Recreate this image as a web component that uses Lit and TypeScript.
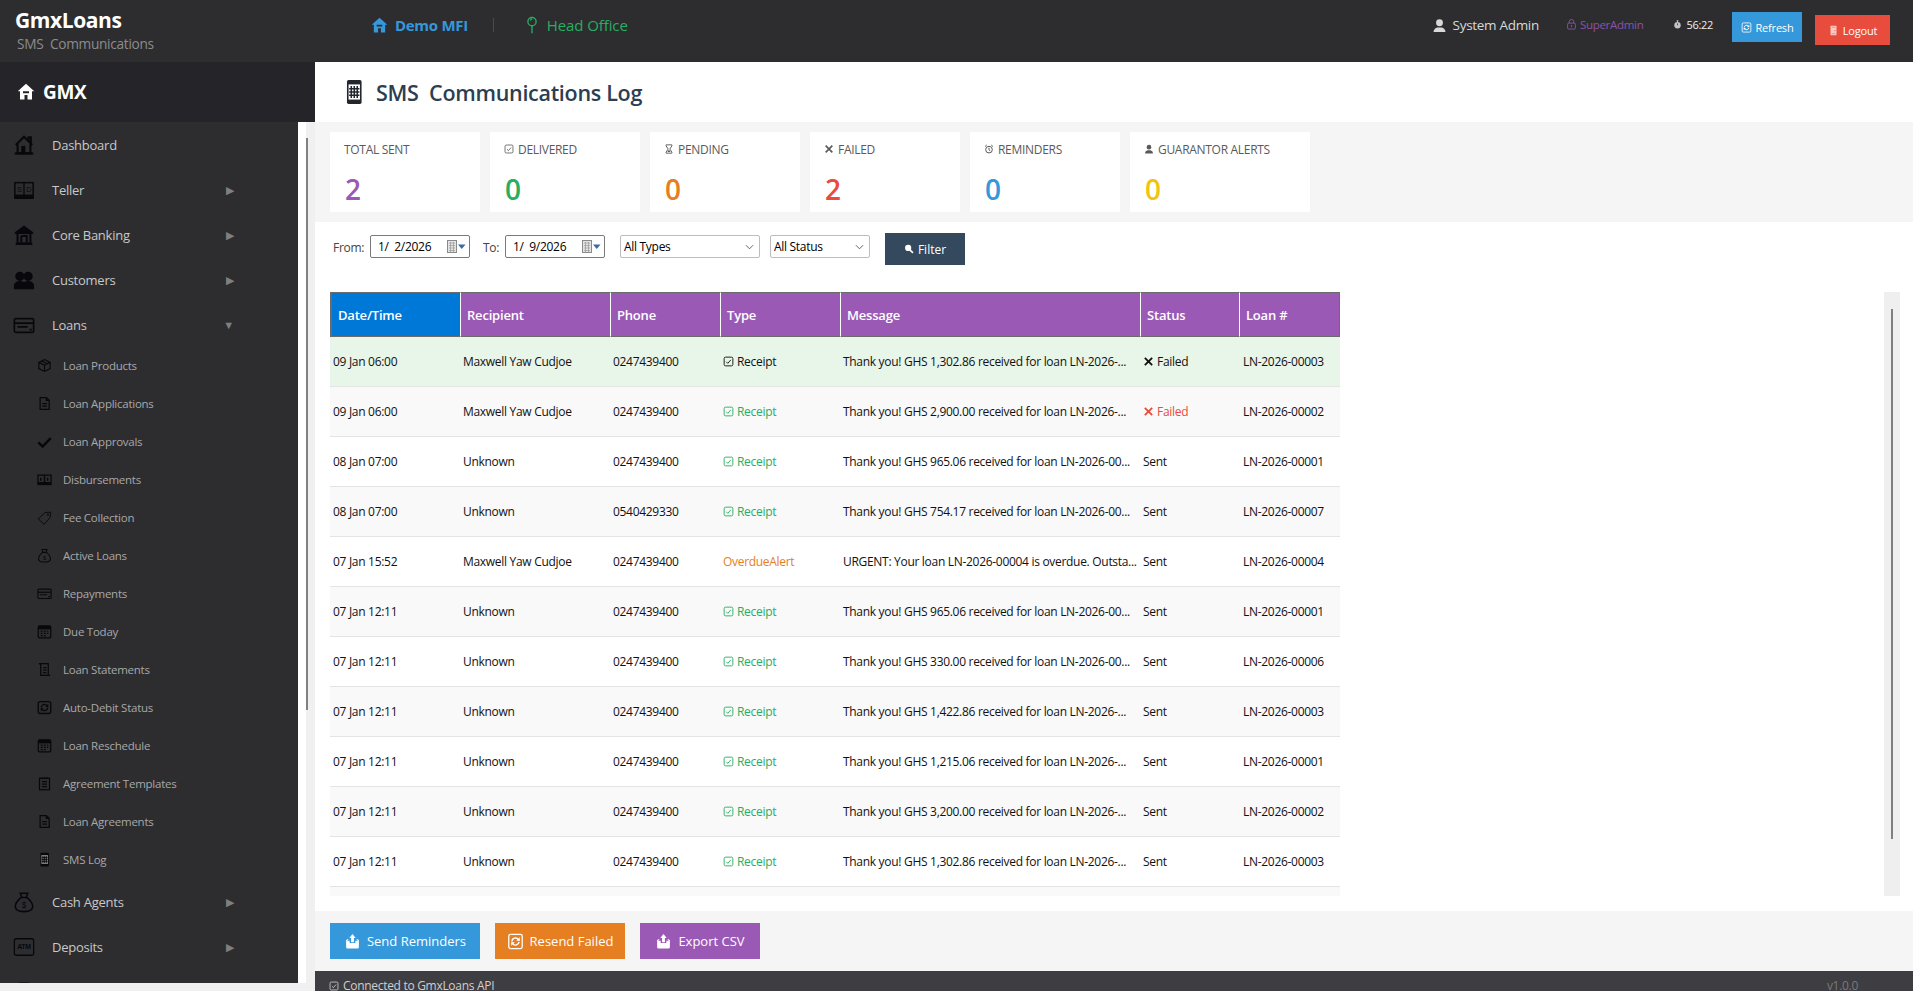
import { LitElement, html, css, svg } from 'lit'
import { customElement } from 'lit/decorators.js'

const icons: Record<string, unknown> = {
  home: svg`<path d="M3 12 12 3l9 9M17 7V3.500h2.500V9.500M5 10.500V21h14V10.500" fill="none" stroke="currentColor" stroke-width="2.200"/><rect x="9" y="13" width="4.500" height="8" fill="currentColor"/><rect x="2" y="20" width="20" height="2.500" fill="currentColor"/>`,
  teller: svg`<rect x="2" y="4" width="20" height="17" fill="none" stroke="currentColor" stroke-width="1.600"/><rect x="2" y="17" width="20" height="4" fill="currentColor"/><path d="M12 4v17" stroke="currentColor" stroke-width="1.500"/><text x="6.800" y="14.500" font-size="8" text-anchor="middle" font-family="Liberation Sans" fill="currentColor">S</text><text x="17.200" y="14.500" font-size="8" text-anchor="middle" font-family="Liberation Sans" fill="currentColor">D</text>`,
  bank: svg`<path d="M12 1.500 2 9v2h20V9zM3 20h18v3H3z" fill="currentColor"/><path d="M5 11v9M19 11v9M9 13h6v7M9 13v7" fill="none" stroke="currentColor" stroke-width="2.200"/>`,
  people: svg`<circle cx="7.500" cy="8" r="5" fill="currentColor"/><circle cx="16.500" cy="8" r="5" fill="currentColor"/><path d="M1 22v-4c0-3 3-5 6.500-5s4.500 1.500 4.500 1.500S13 13 16.500 13 23 15 23 18v4z" fill="currentColor"/>`,
  card: svg`<rect x="1.500" y="5" width="21" height="15" rx="1.500" fill="none" stroke="currentColor" stroke-width="1.800"/><path d="M2 9h20v2H2z" fill="currentColor"/><path d="M5 14h11M18 17h2.500" stroke="currentColor" stroke-width="1.800"/>`,
  box: svg`<path d="M12 2.500 21 7v10l-9 4.500L3 17V7zM3 7l9 4.500L21 7M12 11.500v10M7.500 4.800l9 4.500" fill="none" stroke="currentColor" stroke-width="1.800"/>`,
  doc: svg`<path d="M5 2.500h10l4.500 4.500v14.500H5zM15 2.500V7h4.500M8.500 12h7.500M8.500 16h7.500" fill="none" stroke="currentColor" stroke-width="2"/>`,
  check: svg`<path d="M2 13.500 9 20 22 6.500" fill="none" stroke="currentColor" stroke-width="4"/>`,
  disburse: svg`<rect x="1.500" y="5" width="21" height="15" fill="none" stroke="currentColor" stroke-width="2"/><rect x="1.500" y="16" width="21" height="4" fill="currentColor"/><path d="M12 5v15M6 9v5M17 9v5" stroke="currentColor" stroke-width="2.400"/>`,
  tag: svg`<path d="M2 14 13 4l9-.5-1 8.500-10 11z" fill="none" stroke="currentColor" stroke-width="1.500"/><circle cx="17.500" cy="7.500" r="1.500" fill="currentColor"/>`,
  bag: svg`<path d="M9 7c-3 2.500-6.500 6-6.500 10 0 4 4 5.500 9.500 5.500s9.500-1.500 9.500-5.500c0-4-3.500-7.500-6.500-10zM9 7h6M9.500 6.500 8 2.500h8l-1.500 4" fill="none" stroke="currentColor" stroke-width="1.700"/><text x="12" y="19" font-size="9" text-anchor="middle" font-family="Liberation Sans" fill="currentColor">$</text>`,
  calendar: svg`<rect x="2" y="3" width="20" height="19" rx="2" fill="none" stroke="currentColor" stroke-width="2"/><rect x="2" y="3" width="20" height="5.500" fill="currentColor"/><path d="M6 11.500h3M11 11.500h3M16 11.500h2M6 15h3M11 15h3M16 15h2M6 18.500h3M11 18.500h3" stroke="currentColor" stroke-width="2"/>`,
  scroll: svg`<path d="M3 2.500h15v19M3 2.500c2 0 3 1 3 3v16h15M10 9h5M10 13h5M10 17h5" fill="none" stroke="currentColor" stroke-width="2"/>`,
  sync: svg`<rect x="2" y="2.500" width="20" height="19" rx="3" fill="none" stroke="currentColor" stroke-width="2.200"/><path d="M7 12a5 5 0 0 1 9-3l1.500 1.500M17 12a5 5 0 0 1-9 3l-1.500-1.500" fill="none" stroke="currentColor" stroke-width="2.200"/><path d="M18 6v5h-5zM6 18v-5h5z" fill="currentColor"/>`,
  clipboard: svg`<rect x="4" y="3.500" width="16" height="18.500" fill="none" stroke="currentColor" stroke-width="2"/><path d="M8 2v3M12 2v3M16 2v3M8 9h8M8 13h8M8 17h8" stroke="currentColor" stroke-width="1.800"/>`,
  mobile: svg`<rect x="5.500" y="1" width="13.500" height="22" rx="1.500" fill="currentColor"/><rect x="7" y="5" width="10.500" height="14" fill="#8a8a8d"/><path d="M9.500 6.500v11M12.250 6.500v11M15 6.500v11M7.500 9h9.500M7.500 12h9.500M7.500 15h9.500" stroke="currentColor" stroke-width="1.400"/>`,
  atm: svg`<rect x="1.500" y="3" width="21" height="18" rx="2" fill="none" stroke="currentColor" stroke-width="1.400"/><text x="12" y="14.500" font-size="7.500" font-weight="700" text-anchor="middle" font-family="Liberation Sans" fill="currentColor">ATM</text>`,
  house: svg`<path fill-rule="evenodd" d="M12 1 1 11h3v11h16V11h3zM8 11h8v2.500H8zM10 16h4v6h-4z" fill="currentColor"/>`,
  pin: svg`<circle cx="12" cy="7.500" r="5.500" fill="none" stroke="currentColor" stroke-width="1.800"/><path d="M12 13v10M10 6c.3-1.300 1-2 2-2" fill="none" stroke="currentColor" stroke-width="1.800"/>`,
  user: svg`<circle cx="12" cy="7.500" r="5.500" fill="currentColor"/><path d="M2.500 22.500c0-4.500 3-6.500 6-7.500h7c3 1 6 3 6 7.500z" fill="currentColor"/>`,
  lock: svg`<path d="M7 9V6a5 5 0 0 1 10 0v3" fill="none" stroke="currentColor" stroke-width="2"/><rect x="3.500" y="9" width="17" height="13" rx="2.500" fill="none" stroke="currentColor" stroke-width="2"/><path d="M12 13v5" stroke="currentColor" stroke-width="2"/>`,
  timer: svg`<circle cx="12" cy="14" r="8.500" fill="currentColor"/><path d="M9.500 2h5M12 2v4" stroke="currentColor" stroke-width="2.400"/><path d="M12 14V9" stroke="#2d2d30" stroke-width="2"/>`,
  refresh: svg`<rect x="2.500" y="2" width="19" height="20" rx="2.500" fill="none" stroke="currentColor" stroke-width="1.800"/><path d="M7 12a5 5 0 0 1 9-3l1.500 1.500M17 12.500a5 5 0 0 1-9 2.500l-1.500-1.500" fill="none" stroke="currentColor" stroke-width="2"/><path d="M18 6v5h-5zM6 18v-5h5z" fill="currentColor"/>`,
  door: svg`<rect x="5.500" y="1.500" width="13" height="21" rx="1" fill="#ffc9c2"/><circle cx="15" cy="12" r="1.300" fill="#e74c3c"/><path d="M8 5h8M8 19h8" stroke="#e74c3c" stroke-width="1"/>`,
  outbox: svg`<path d="M3 11h5v3h8v-3h5v9a2 2 0 0 1-2 2H5a2 2 0 0 1-2-2z" fill="currentColor"/><path d="M12 1.500 7.500 7H10v6h4V7h2.500z" fill="currentColor"/><path d="M6 9 3 11M18 9l3 2" stroke="currentColor" stroke-width="1.500"/>`,
  tick: svg`<rect x="2.500" y="2.500" width="19" height="19" rx="3" fill="none" stroke="currentColor" stroke-width="2"/><path d="M7 12.500l3.500 3.500L17 8.500" fill="none" stroke="currentColor" stroke-width="2"/>`,
  cross: svg`<path d="M4 4l16 16M20 4 4 20" fill="none" stroke="currentColor" stroke-width="4"/>`,
  hourglass: svg`<path d="M5 2h14v2.500L14 12l5 7.500V22H5v-2.500L10 12 5 4.500z" fill="none" stroke="currentColor" stroke-width="2.200"/><path d="M8 19h8l-4-5z" fill="currentColor"/>`,
  alarm: svg`<circle cx="12" cy="13.500" r="8" fill="none" stroke="currentColor" stroke-width="2.400"/><path d="M12 9v5l3 2M2.500 6 6.500 2.500M21.500 6l-4-3.500" fill="none" stroke="currentColor" stroke-width="2.400"/>`,
  search: svg`<circle cx="10" cy="9.500" r="7.500" fill="currentColor"/><path d="M14 14l7.500 7.500" stroke="currentColor" stroke-width="4"/>`,
}

const icon = (name: string) => html`<svg class="ico" viewBox="0 0 24 24" aria-hidden="true">${icons[name]}</svg>`

const calendarPicker = html`<svg class="cal" viewBox="0 0 19 14" aria-hidden="true">
  <rect x="0.500" y="0.500" width="9" height="12" fill="#e4e4e4" stroke="#8a8a8a"/>
  <path d="M2 3h6M2 5.500h6M2 8h6M2 10.500h6M3.500 2v10M6.500 2v10" stroke="#9a9a9a" stroke-width=".7"/>
  <path d="M11 4.500h7.500L14.750 9z" fill="#3a6ba5"/>
</svg>`

const chevron = html`<svg class="chev" viewBox="0 0 10 6" aria-hidden="true"><path d="M1 1l4 4 4-4" fill="none" stroke="#555" stroke-width="1"/></svg>`

const topNav = [
  { label: 'Dashboard', icon: 'home' },
  { label: 'Teller', icon: 'teller', arrow: '▶' },
  { label: 'Core Banking', icon: 'bank', arrow: '▶' },
  { label: 'Customers', icon: 'people', arrow: '▶' },
  { label: 'Loans', icon: 'card', arrow: '▼' },
]
const loanNav = [
  ['Loan Products', 'box'],
  ['Loan Applications', 'doc'],
  ['Loan Approvals', 'check'],
  ['Disbursements', 'disburse'],
  ['Fee Collection', 'tag'],
  ['Active Loans', 'bag'],
  ['Repayments', 'card'],
  ['Due Today', 'calendar'],
  ['Loan Statements', 'scroll'],
  ['Auto-Debit Status', 'sync'],
  ['Loan Reschedule', 'calendar'],
  ['Agreement Templates', 'clipboard'],
  ['Loan Agreements', 'doc'],
  ['SMS Log', 'mobile'],
]
// the last row is scrolled mostly out of view, only its icon top shows
const bottomNav = [
  { label: 'Cash Agents', icon: 'bag', arrow: '▶' },
  { label: 'Deposits', icon: 'atm', arrow: '▶' },
  { label: '', icon: 'bag' },
]

const stats = [
  { label: 'TOTAL SENT', value: '2', color: '#9b59b6' },
  { label: 'DELIVERED', value: '0', color: '#27ae60', icon: 'tick' },
  { label: 'PENDING', value: '0', color: '#e67e22', icon: 'hourglass' },
  { label: 'FAILED', value: '2', color: '#e74c3c', icon: 'cross' },
  { label: 'REMINDERS', value: '0', color: '#3498db', icon: 'alarm' },
  { label: 'GUARANTOR ALERTS', value: '0', color: '#f1c40f', icon: 'user' },
]

const thanks = (amount: string, tail: string) => `Thank you! GHS ${amount} received for loan ${tail}`
const rows = [
  ['09 Jan 06:00', 'Maxwell Yaw Cudjoe', '0247439400', 'Receipt', thanks('1,302.86', 'LN-2026-...'), 'Failed', 'LN-2026-00003'],
  ['09 Jan 06:00', 'Maxwell Yaw Cudjoe', '0247439400', 'Receipt', thanks('2,900.00', 'LN-2026-...'), 'Failed', 'LN-2026-00002'],
  ['08 Jan 07:00', 'Unknown', '0247439400', 'Receipt', thanks('965.06', 'LN-2026-00...'), 'Sent', 'LN-2026-00001'],
  ['08 Jan 07:00', 'Unknown', '0540429330', 'Receipt', thanks('754.17', 'LN-2026-00...'), 'Sent', 'LN-2026-00007'],
  ['07 Jan 15:52', 'Maxwell Yaw Cudjoe', '0247439400', 'OverdueAlert', 'URGENT: Your loan LN-2026-00004 is overdue. Outsta...', 'Sent', 'LN-2026-00004'],
  ['07 Jan 12:11', 'Unknown', '0247439400', 'Receipt', thanks('965.06', 'LN-2026-00...'), 'Sent', 'LN-2026-00001'],
  ['07 Jan 12:11', 'Unknown', '0247439400', 'Receipt', thanks('330.00', 'LN-2026-00...'), 'Sent', 'LN-2026-00006'],
  ['07 Jan 12:11', 'Unknown', '0247439400', 'Receipt', thanks('1,422.86', 'LN-2026-...'), 'Sent', 'LN-2026-00003'],
  ['07 Jan 12:11', 'Unknown', '0247439400', 'Receipt', thanks('1,215.06', 'LN-2026-...'), 'Sent', 'LN-2026-00001'],
  ['07 Jan 12:11', 'Unknown', '0247439400', 'Receipt', thanks('3,200.00', 'LN-2026-...'), 'Sent', 'LN-2026-00002'],
  ['07 Jan 12:11', 'Unknown', '0247439400', 'Receipt', thanks('1,302.86', 'LN-2026-...'), 'Sent', 'LN-2026-00003'],
]
const columns = ['Date/Time', 'Recipient', 'Phone', 'Type', 'Message', 'Status', 'Loan #']
const columnWidths = [131, 150, 110, 120, 300, 99, 100]

@customElement('app-root')
export class AppRoot extends LitElement {
  static styles = css`
    :host {
      display: flex;
      flex-direction: column;
      height: 100vh;
      overflow: hidden;
      background: #f0f0f0;
      font-family: "Open Sans", "Noto Sans", sans-serif;
      font-size: 12px;
      letter-spacing: -0.3px;
      color: #111;
    }
    .ico {
      display: block;
      flex: none;
      width: 1em;
      height: 1em;
    }

    .topbar {
      flex: none;
      height: 62px;
      display: flex;
      background: #2d2d30;
      color: #ecf0f1;
    }
    .brand {
      width: 356px;
      padding: 6px 0 0 15px;
      box-sizing: border-box;
    }
    .brand-name {
      font-size: 21px;
      font-weight: 700;
      line-height: 28px;
      color: #fff;
      letter-spacing: -0.4px;
    }
    .brand-sub {
      font-size: 13.700px;
      line-height: 20px;
      margin: 0 0 0 2px;
      color: #8c8c8c;
      white-space: pre;
    }
    .org {
      display: flex;
      align-items: center;
      height: 50px;
      margin-left: 15px;
      font-size: 15px;
    }
    .org .ico { font-size: 17px; }
    .org-name {
      display: flex;
      align-items: center;
      gap: 7px;
      font-weight: 700;
      color: #3498db;
    }
    .org-sep {
      width: 1px;
      height: 14px;
      margin: 0 29px 0 25px;
      background: #4a4a4d;
    }
    .org-branch {
      display: flex;
      align-items: center;
      gap: 6px;
      letter-spacing: -0.1px;
      color: #27ae60;
    }
    .org-branch .ico { font-size: 18px; }
    .session {
      margin-left: auto;
      display: flex;
      align-items: flex-start;
      padding-right: 23px;
    }
    .session-item {
      display: flex;
      align-items: center;
      height: 20px;
    }
    .session-user { margin: 15px 27px 0 0; font-size: 13.500px; color: #d8d8d8; gap: 6px; }
    .session-user .ico { font-size: 15px; }
    .session-role { margin: 14px 30px 0 0; font-size: 11.500px; color: #8a52a8; gap: 3px; }
    .session-role .ico { font-size: 11px; }
    .session-time { margin: 14px 19px 0 0; font-size: 11px; gap: 4px; }
    .session-time .ico { font-size: 9px; color: #c4c4c4; }
    .top-btn {
      display: flex;
      align-items: center;
      justify-content: center;
      gap: 4px;
      height: 30px;
      border: none;
      color: #fff;
      font: inherit;
      font-size: 11px;
      letter-spacing: -0.2px;
    }
    .top-btn .ico { font-size: 11px; }
    .refresh { width: 70px; margin: 12px 13px 0 0; background: #3498db; }
    .logout { width: 75px; margin-top: 15px; background: #e74c3c; }

    .body {
      flex: 1;
      min-height: 0;
      display: flex;
    }
    .sidebar {
      flex: none;
      width: 315px;
      display: flex;
      flex-direction: column;
    }
    .side-head {
      flex: none;
      height: 60px;
      display: flex;
      align-items: center;
      gap: 8px;
      padding-left: 17px;
      background: #252429;
      color: #fff;
      font-size: 19px;
      font-weight: 700;
    }
    .side-head .ico { font-size: 18px; }
    .side-body {
      flex: none;
      height: 861px;
      display: flex;
      overflow: hidden;
    }
    .nav {
      flex: none;
      width: 298px;
      background: #2d2d30;
      color: #c8c8c8;
      overflow: hidden;
      letter-spacing: -0.25px;
    }
    .nav-item {
      height: 45px;
      display: flex;
      align-items: center;
      padding-left: 13px;
      font-size: 13px;
    }
    .nav-item .ico {
      font-size: 22px;
      margin-right: 17px;
      color: #08080c;
    }
    .nav-arrow {
      margin-left: auto;
      margin-right: 64px;
      font-size: 11px;
      color: #7f7f7f;
    }
    .nav-sub {
      box-sizing: border-box;
      height: 38px;
      display: flex;
      align-items: center;
      padding: 0 0 2px 37px;
      font-size: 11.500px;
      color: #a8a8a8;
    }
    .nav-sub .ico {
      font-size: 15px;
      margin-right: 11px;
      color: #08080c;
    }
    .side-scroll {
      flex: none;
      width: 17px;
      box-sizing: border-box;
      border-left: 8px solid #fff;
      background: #f0f0f0;
      padding-top: 16px;
    }
    .side-scroll i {
      display: block;
      width: 2px;
      height: 572px;
      background: #808080;
    }

    .main {
      flex: 1;
      min-width: 0;
      display: flex;
      flex-direction: column;
      background: #f5f5f5;
    }
    .page-title {
      flex: none;
      height: 60px;
      display: flex;
      align-items: center;
      padding-left: 26px;
      gap: 9px;
      background: #fff;
      color: #2c3e50;
      font-size: 21.500px;
      font-weight: 600;
      white-space: pre;
    }
    .page-title .ico { font-size: 26px; color: #23262d; }
    .page-title .ico rect:nth-child(2) { fill: #fff; }
    .stats {
      flex: none;
      box-sizing: border-box;
      height: 100px;
      display: flex;
      gap: 10px;
      padding: 10px 15px;
    }
    .stat {
      box-sizing: border-box;
      width: 150px;
      height: 80px;
      padding: 8px 13px 8px 14px;
      background: #fff;
    }
    .stat:last-child { width: 180px; }
    .stat-label {
      display: flex;
      align-items: center;
      gap: 4px;
      height: 18px;
      color: #5a5a5a;
      white-space: nowrap;
    }
    .stat-label .ico { font-size: 10px; }
    .stat-value {
      margin: 12px 0 0 1px;
      font-size: 28px;
      line-height: 38px;
      font-weight: 600;
    }

    .panel {
      flex: 1;
      min-height: 0;
      display: flex;
      flex-direction: column;
      padding: 11px 13px 15px 15px;
      background: #fff;
    }
    .filters {
      flex: none;
      height: 32px;
      display: flex;
      align-items: flex-start;
      color: #444;
    }
    .filters label {
      box-sizing: border-box;
      height: 23px;
      margin-top: 3px;
      line-height: 23px;
    }
    .from { width: 40px; padding-left: 3px; }
    .to { width: 22px; margin-left: 13px; }
    .date-input {
      box-sizing: border-box;
      width: 100px;
      height: 23px;
      margin-top: 2px;
      display: flex;
      align-items: center;
      justify-content: space-between;
      padding: 0 3px 0 7px;
      border: 1px solid #7a7a7a;
      border-radius: 2px;
      background: #fff;
      color: #000;
      white-space: pre;
    }
    .cal { display: block; width: 19px; height: 14px; }
    .select {
      box-sizing: border-box;
      height: 23px;
      margin-top: 2px;
      display: flex;
      align-items: center;
      justify-content: space-between;
      padding: 0 5px 0 3px;
      border: 1px solid #bdbdbd;
      border-radius: 2px;
      color: #000;
    }
    .select.types { width: 140px; margin: 2px 10px 0 15px; }
    .select.state { width: 100px; margin-right: 15px; }
    .chev { display: block; width: 9px; height: 6px; }
    .filter-btn {
      display: flex;
      align-items: center;
      justify-content: center;
      gap: 4px;
      width: 80px;
      height: 32px;
      border: none;
      background: #34495e;
      color: #fff;
      font: inherit;
    }
    .filter-btn .ico { font-size: 10px; }
    .table-area {
      flex: 1;
      min-height: 0;
      display: flex;
      margin-top: 27px;
      overflow: hidden;
    }
    .table-wrap {
      flex: 1;
      min-width: 0;
      overflow: hidden;
    }
    table {
      border-collapse: separate;
      border-spacing: 0;
      table-layout: fixed;
      width: 1010px;
    }
    th {
      box-sizing: border-box;
      height: 45px;
      padding: 0 0 0 6px;
      text-align: left;
      font-size: 13px;
      font-weight: 600;
      letter-spacing: -0.2px;
      color: #fff;
      background: #9b59b6;
      border-top: 1px solid #6b6b6b;
      border-bottom: 1px solid #6b6b6b;
      border-right: 1px solid #fff;
    }
    th:first-child {
      background: #0078d7;
      border-left: 2px solid #6b6b6b;
    }
    th:last-child { border-right: 1px solid #6b6b6b; }
    td {
      box-sizing: border-box;
      height: 50px;
      padding: 0 0 0 2px;
      border-bottom: 1px solid #e4e4e4;
      white-space: nowrap;
      overflow: hidden;
      color: #111;
    }
    td:first-child, td:last-child { padding-left: 3px; }
    tr:nth-child(even) td { background: #f9f9f9; }
    tr.selected td { background: #e8f5e9; }
    .tag {
      display: flex;
      align-items: center;
      gap: 3px;
    }
    .tag .ico { font-size: 11px; }
    .tag.receipt { color: #27ae60; }
    .tag.overdue { color: #e67e22; }
    .tag.failed { color: #e74c3c; }
    tr.selected .tag { color: #111; }
    .table-scroll {
      flex: none;
      width: 16px;
      display: flex;
      justify-content: center;
      padding-top: 17px;
      background: #efefef;
    }
    .table-scroll i {
      display: block;
      width: 2px;
      height: 530px;
      background: #808080;
    }

    .actions {
      flex: none;
      height: 60px;
      box-sizing: border-box;
      display: flex;
      gap: 15px;
      padding: 12px 15px;
    }
    .action {
      display: flex;
      align-items: center;
      justify-content: center;
      gap: 6px;
      height: 36px;
      border: none;
      color: #fff;
      font: inherit;
      font-size: 13px;
    }
    .action .ico { font-size: 17px; }
    .action.blue { width: 150px; background: #3498db; }
    .action.orange { width: 130px; background: #e67e22; }
    .action.purple { width: 120px; background: #9b59b6; }

    .status {
      flex: none;
      height: 20px;
      display: flex;
      justify-content: space-between;
      padding: 6px 55px 0 14px;
      box-sizing: border-box;
      background: #3e3d42;
      color: #cfcfcf;
      font-size: 12px;
      line-height: 18px;
      overflow: hidden;
    }
    .status-left {
      display: flex;
      align-items: center;
      gap: 4px;
      height: 18px;
    }
    .status-left .ico { font-size: 10px; }
    .version { color: #7a7a7a; }
  `

  renderTopItem(item: { label: string; icon: string; arrow?: string }) {
    return html`
      <div class="nav-item">
        ${icon(item.icon)}${item.label ? html`<span>${item.label}</span>` : ''}
        ${item.arrow ? html`<span class="nav-arrow">${item.arrow}</span>` : ''}
      </div>
    `
  }

  renderTypeCell(type: string) {
    if (type === 'OverdueAlert') return html`<span class="tag overdue">OverdueAlert</span>`
    return html`<span class="tag receipt">${icon('tick')}Receipt</span>`
  }

  render() {
    return html`
      <header class="topbar">
        <div class="brand">
          <div class="brand-name">GmxLoans</div>
          <div class="brand-sub">SMS  Communications</div>
        </div>
        <div class="org">
          <span class="org-name">${icon('house')}Demo MFI</span>
          <span class="org-sep"></span>
          <span class="org-branch">${icon('pin')}Head Office</span>
        </div>
        <div class="session">
          <span class="session-item session-user">${icon('user')}System Admin</span>
          <span class="session-item session-role">${icon('lock')}SuperAdmin</span>
          <span class="session-item session-time">${icon('timer')}56:22</span>
          <button class="top-btn refresh">${icon('refresh')}Refresh</button>
          <button class="top-btn logout">${icon('door')}Logout</button>
        </div>
      </header>

      <div class="body">
        <aside class="sidebar">
          <div class="side-head">${icon('house')}GMX</div>
          <div class="side-body">
            <nav class="nav">
              ${topNav.map((item) => this.renderTopItem(item))}
              ${loanNav.map(([label, name]) => html`
                <div class="nav-sub">${icon(name)}<span>${label}</span></div>
              `)}
              ${bottomNav.map((item) => this.renderTopItem(item))}
            </nav>
            <div class="side-scroll"><i></i></div>
          </div>
        </aside>

        <main class="main">
          <div class="page-title">${icon('mobile')}SMS  Communications Log</div>

          <section class="stats">
            ${stats.map((s) => html`
              <div class="stat">
                <div class="stat-label">${s.icon ? icon(s.icon) : ''}${s.label}</div>
                <div class="stat-value" style="color:${s.color}">${s.value}</div>
              </div>
            `)}
          </section>

          <section class="panel">
            <div class="filters">
              <label class="from">From:</label>
              <div class="date-input">1/  2/2026${calendarPicker}</div>
              <label class="to">To:</label>
              <div class="date-input">1/  9/2026${calendarPicker}</div>
              <div class="select types">All Types${chevron}</div>
              <div class="select state">All Status${chevron}</div>
              <button class="filter-btn">${icon('search')}Filter</button>
            </div>
            <div class="table-area">
              <div class="table-wrap">
                <table>
                  <colgroup>${columnWidths.map((w) => html`<col style="width:${w}px" />`)}</colgroup>
                  <thead>
                    <tr>${columns.map((c) => html`<th>${c}</th>`)}</tr>
                  </thead>
                  <tbody>
                    ${rows.map((r, i) => html`
                      <tr class="${i === 0 ? 'selected' : ''}">
                        <td>${r[0]}</td>
                        <td>${r[1]}</td>
                        <td>${r[2]}</td>
                        <td>${this.renderTypeCell(r[3])}</td>
                        <td>${r[4]}</td>
                        <td>${r[5] === 'Failed'
                          ? html`<span class="tag failed">${icon('cross')}Failed</span>`
                          : r[5]}</td>
                        <td>${r[6]}</td>
                      </tr>
                    `)}
                    <tr>${columns.map(() => html`<td></td>`)}</tr>
                  </tbody>
                </table>
              </div>
              <div class="table-scroll"><i></i></div>
            </div>
          </section>

          <div class="actions">
            <button class="action blue">${icon('outbox')}Send Reminders</button>
            <button class="action orange">${icon('refresh')}Resend Failed</button>
            <button class="action purple">${icon('outbox')}Export CSV</button>
          </div>

          <footer class="status">
            <span class="status-left">${icon('tick')}Connected to GmxLoans API</span>
            <span class="version">v1.0.0</span>
          </footer>
        </main>
      </div>
    `
  }
}
